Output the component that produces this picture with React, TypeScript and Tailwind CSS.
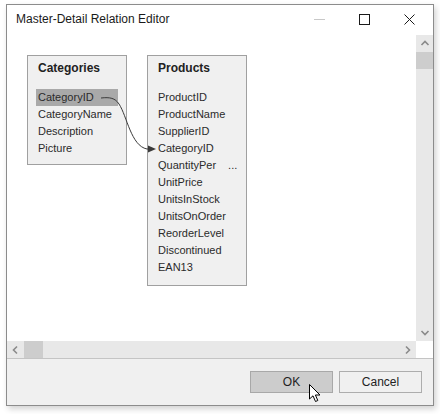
import React from "react";

const font = { fontFamily: '"Liberation Sans", Arial, sans-serif' };

function Chevron({ dir }: { dir: "up" | "down" | "left" | "right" }) {
  const paths: Record<string, string> = {
    up: "M1.5 6 L5 2.5 L8.5 6",
    down: "M1.5 3 L5 6.5 L8.5 3",
    left: "M6 1.5 L2.5 5 L6 8.5",
    right: "M3 1.5 L6.5 5 L3 8.5",
  };
  return (
    <svg width="10" height="10" viewBox="0 0 10 10">
      <path d={paths[dir]} fill="none" stroke="#8a8a8a" strokeWidth="1.6" />
    </svg>
  );
}

function Row({ children, highlight }: { children: React.ReactNode; highlight?: boolean }) {
  return (
    <div
      className={`h-[17px] flex items-center ml-[8px] pl-[2px] w-[82px] whitespace-nowrap ${
        highlight ? "bg-[#a9a9a9]" : ""
      }`}
    >
      {children}
    </div>
  );
}

export default function App() {
  const cats = ["CategoryID", "CategoryName", "Description", "Picture"];
  const prods = [
    "ProductID",
    "ProductName",
    "SupplierID",
    "CategoryID",
    "QuantityPer",
    "UnitPrice",
    "UnitsInStock",
    "UnitsOnOrder",
    "ReorderLevel",
    "Discontinued",
    "EAN13",
  ];
  return (
    <div className="w-[440px] h-[414px] bg-white pt-[4px] pl-[6px] relative" style={font}>
      <div className="w-[428px] h-[402px] border border-[#8c8c8c] bg-white flex flex-col shadow-[2px_3px_6px_rgba(0,0,0,0.18)]">
        {/* Title bar */}
        <div className="h-[30px] flex items-center shrink-0 relative">
          <span className="ml-[9px] text-[12px] text-[#1a1a1a] leading-none -mt-[2px]">
            Master-Detail Relation Editor
          </span>
          <div className="absolute left-[307px] top-[14px] w-[11px] h-[1px] bg-[#c8c8c8]" />
          <div className="absolute left-[352px] top-[9px] w-[11px] h-[11px] border border-[#1a1a1a]" />
          <svg className="absolute left-[397px] top-[9px]" width="11" height="11" viewBox="0 0 11 11">
            <path d="M0.5 0.5 L10.5 10.5 M10.5 0.5 L0.5 10.5" stroke="#1a1a1a" strokeWidth="1" />
          </svg>
        </div>
        {/* Content with scrollbars */}
        <div className="flex h-[306px] shrink-0">
          <div className="flex-1 relative overflow-hidden text-[11px] text-[#2b2b2b]">
            {/* Categories */}
            <div className="absolute left-[20px] top-[20px] w-[100px] h-[110px] bg-[#f0f0f0] border border-[#a0a0a0] pt-[3px]">
              <div className="h-[17px] flex items-center pl-[10px] font-bold text-[12px] text-[#222]">Categories</div>
              <div className="h-[13px]" />
              {cats.map((c, i) => (
                <Row key={c} highlight={i === 0}>
                  {c}
                </Row>
              ))}
            </div>
            {/* Products */}
            <div className="absolute left-[140px] top-[20px] w-[100px] h-[231px] bg-[#f0f0f0] border border-[#a0a0a0] pt-[3px]">
              <div className="h-[17px] flex items-center pl-[10px] font-bold text-[12px] text-[#222]">Products</div>
              <div className="h-[13px]" />
              {prods.map((p) => (
                <Row key={p}>
                  {p}
                  {p === "QuantityPer" && <span className="ml-[12px]">...</span>}
                </Row>
              ))}
            </div>
            {/* Connector */}
            <svg className="absolute left-0 top-0" width="409" height="306">
              <path
                d="M94 63 C 103 62, 108 63, 112 69 C 120 81, 124 111, 140 114 L 143 114"
                fill="none"
                stroke="#3a3a3a"
                strokeWidth="1"
              />
              <path d="M141 110.5 L149 114 L141 117.5 Z" fill="#3a3a3a" />
            </svg>
          </div>
          {/* Vertical scrollbar */}
          <div className="w-[17px] bg-[#e8e8e8] flex flex-col">
            <div className="h-[17px] flex items-center justify-center">
              <Chevron dir="up" />
            </div>
            <div className="h-[17px] bg-[#cdcdcd]" />
            <div className="flex-1" />
            <div className="h-[17px] flex items-center justify-center">
              <Chevron dir="down" />
            </div>
          </div>
        </div>
        {/* Horizontal scrollbar */}
        <div className="flex h-[17px] shrink-0">
          <div className="flex-1 bg-[#e8e8e8] flex">
            <div className="w-[17px] flex items-center justify-center">
              <Chevron dir="left" />
            </div>
            <div className="w-[19px] bg-[#cdcdcd]" />
            <div className="flex-1" />
            <div className="w-[17px] flex items-center justify-center">
              <Chevron dir="right" />
            </div>
          </div>
          <div className="w-[17px] bg-white" />
        </div>
        {/* Footer */}
        <div className="flex-1 bg-[#f0f0f0] border-t border-[#c4c4c4] flex justify-end items-start pt-[12px] pr-[11px] gap-[6px] relative">
          <button className="w-[83px] h-[22px] bg-[#cccccc] border border-[#a8a8a8] text-[12px] text-[#222] flex items-center justify-center">
            OK
          </button>
          <button className="w-[83px] h-[22px] bg-[#f0f0f0] border border-[#adadad] text-[12px] text-[#222] flex items-center justify-center">
            Cancel
          </button>
          <svg className="absolute left-[302px] top-[25px]" width="13" height="19" viewBox="0 0 13 19">
            <path
              d="M0.5 0.5 L0.5 15 L4 11.8 L6.5 17.5 L8.8 16.5 L6.4 11 L11 11 Z"
              fill="white"
              stroke="black"
              strokeWidth="1"
              strokeLinejoin="miter"
            />
          </svg>
        </div>
      </div>
    </div>
  );
}
